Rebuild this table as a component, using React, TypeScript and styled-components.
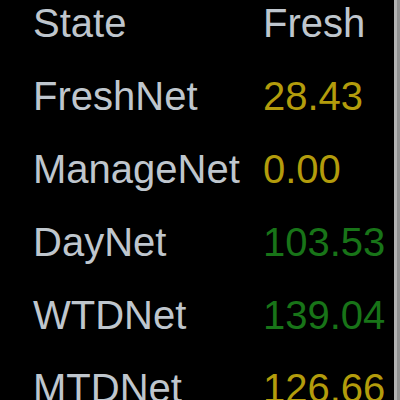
import React from "react";
import styled, { createGlobalStyle } from "styled-components";

const Global = createGlobalStyle`
  html, body { margin: 0; padding: 0; background: #929292; }
  body { font-family: "Liberation Sans", Arial, sans-serif; }
`;

const Panel = styled.div`
  box-sizing: border-box;
  width: 397px;
  height: 400px;
  overflow: hidden;
  background: #000;
  border-right: 3px solid #b4b4b4;
  padding-left: 33px;
  display: grid;
  grid-template-columns: 230px 1fr;
  grid-auto-rows: 46px;
  row-gap: 27px;
  align-content: start;
  font-size: 40px;
  line-height: 46px;
`;

const Label = styled.div`
  color: #bfc6cd;
  white-space: nowrap;
`;

const Value = styled.div<{ $tone: "plain" | "gold" | "green" }>`
  white-space: nowrap;
  color: ${(p) =>
    p.$tone === "gold" ? "#b39c0c" : p.$tone === "green" ? "#187418" : "#bfc6cd"};
`;

const rows: { label: string; value: string; tone: "plain" | "gold" | "green" }[] = [
  { label: "State", value: "Fresh", tone: "plain" },
  { label: "FreshNet", value: "28.43", tone: "gold" },
  { label: "ManageNet", value: "0.00", tone: "gold" },
  { label: "DayNet", value: "103.53", tone: "green" },
  { label: "WTDNet", value: "139.04", tone: "green" },
  { label: "MTDNet", value: "126.66", tone: "gold" },
];

export default function App() {
  return (
    <>
      <Global />
      <Panel>
        {rows.map((r) => (
          <React.Fragment key={r.label}>
            <Label>{r.label}</Label>
            <Value $tone={r.tone}>{r.value}</Value>
          </React.Fragment>
        ))}
      </Panel>
    </>
  );
}
